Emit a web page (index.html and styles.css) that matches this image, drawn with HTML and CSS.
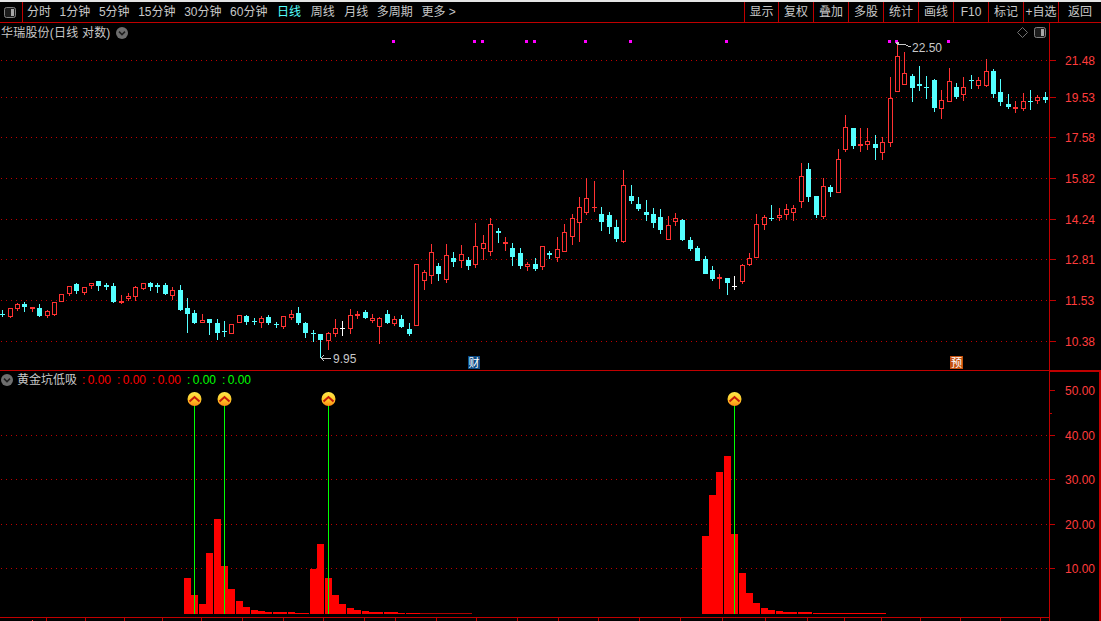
FILE: index.html
```html
<!DOCTYPE html>
<html lang="zh">
<head>
<meta charset="utf-8">
<title>华瑞股份</title>
<link rel="stylesheet" href="styles.css">
</head>
<body>
<div class="app">
  <header class="toolbar">
    <div class="panel-btn">
      <svg class="panel-icon" viewBox="0 0 12 11"><rect x=".5" y=".5" width="11" height="10" rx="2" fill="#1c1c1c" stroke="#808080"/><rect x="7" y="2" width="3" height="7" fill="#a8a8a8"/></svg>
    </div>
    <nav class="tabs">
      <span>分时</span><span>1分钟</span><span>5分钟</span><span>15分钟</span><span>30分钟</span><span>60分钟</span>
      <span class="active">日线</span><span>周线</span><span class="nudge">月线</span><span>多周期</span><span>更多 &gt;</span>
    </nav>
    <div class="actions">
      <span class="first">显示</span><span>复权</span><span>叠加</span><span>多股</span><span>统计</span><span>画线</span><span>F10</span><span>标记</span><span>+自选</span><span class="last">返回</span>
    </div>
  </header>

  <section class="pane pane-price">
    <svg id="price" class="plot" viewBox="0 23 1101 348" width="1101" height="348"></svg>
    <div class="pane-title">
      <span class="stock">华瑞股份(日线 对数)</span>
      <svg class="round-icon" viewBox="0 0 12 12"><circle cx="6" cy="6" r="6" fill="#6e6e6e"/><path d="M3 4.6 6 7.6 9 4.6" fill="none" stroke="#1e1e1e" stroke-width="1.5"/></svg>
    </div>
    <div class="pane-tools">
      <svg class="diamond" viewBox="0 0 11 11"><path d="M5.5.5 10.5 5.5 5.5 10.5 .5 5.5Z" fill="none" stroke="#707070"/></svg>
      <svg class="panel-icon" viewBox="0 0 12 11"><rect x=".5" y=".5" width="11" height="10" rx="2" fill="#1c1c1c" stroke="#808080"/><rect x="7" y="2" width="3" height="7" fill="#a8a8a8"/></svg>
    </div>
  </section>

  <section class="pane pane-indicator">
    <svg id="indicator" class="plot" viewBox="0 371 1101 250" width="1101" height="250"></svg>
    <div class="pane-title indicator-title">
      <svg class="round-icon" viewBox="0 0 12 12"><circle cx="6" cy="6" r="6" fill="#6e6e6e"/><path d="M3 4.6 6 7.6 9 4.6" fill="none" stroke="#1e1e1e" stroke-width="1.5"/></svg>
      <span class="name">黄金坑低吸</span>
      <span class="val red">: 0.00</span><span class="val red">: 0.00</span><span class="val red">: 0.00</span><span class="val green">: 0.00</span><span class="val green">: 0.00</span>
    </div>
  </section>
</div>
<script src="chart.js"></script>
</body>
</html>
```
FILE: styles.css
```css
* { box-sizing: border-box; }
html, body { margin: 0; padding: 0; background: #000; }
body { font: 12px/1 "Liberation Sans", "Noto Sans CJK SC", sans-serif; color: #c8c8c8; }
.app { width: 1101px; height: 621px; overflow: hidden; display: flex; flex-direction: column; background: #000; border-top: 2px solid #e4e4e4; }

.toolbar { display: flex; height: 21px; flex: none; border-bottom: 1px solid #c00000; }
.panel-btn { width: 23px; flex: none; border-right: 1px solid #c00000; display: flex; align-items: center; justify-content: center; padding-right: 2px; }
.panel-icon { width: 12px; height: 11px; display: block; }
.tabs { flex: 1; display: flex; align-items: center; gap: 8.6px; padding-left: 4px; white-space: nowrap; }
.tabs .active { color: #54ffff; margin: 0 1px; }
.tabs .nudge { margin-left: 1px; }
.actions { display: flex; flex: none; }
.actions span { width: 35px; border-left: 1px solid #c00000; display: flex; align-items: center; justify-content: center; white-space: nowrap; }
.actions .first { width: 34px; }
.actions .last { width: 43px; }

.pane { position: relative; flex: none; }
.pane-price { height: 348px; }
.pane-indicator { height: 250px; }
.plot { display: block; shape-rendering: crispEdges; font: 12px "Liberation Sans", sans-serif; }
.plot text { shape-rendering: auto; }
.axis-label { fill: #ff3c3c; }
.note { fill: #c8c8c8; }
.badge { font: 11px "Noto Sans CJK SC", sans-serif; fill: #fff; }

.pane-title { position: absolute; left: 1px; top: 3px; display: flex; align-items: center; gap: 5px; height: 13px; }
.stock { letter-spacing: 0.2px; }
.round-icon { width: 12px; height: 12px; display: block; flex: none; }
.pane-tools { position: absolute; left: 1017px; top: 4px; display: flex; align-items: center; gap: 6px; }
.diamond { width: 11px; height: 11px; display: block; }
.indicator-title { top: 2px; gap: 0; }
.indicator-title .name { margin-left: 4px; width: 65px; }
.val { width: 35px; white-space: pre; word-spacing: -1px; }
.red { color: #ff0000; }
.green { color: #00ff00; }
```
FILE: chart.js
```js
var NS = 'http://www.w3.org/2000/svg';
function el(parent, tag, attrs, text) {
  var e = document.createElementNS(NS, tag);
  for (var k in attrs) e.setAttribute(k, attrs[k]);
  if (text) e.textContent = text;
  parent.appendChild(e);
  return e;
}
function rect(p, x, y, w, h, fill) { return el(p, 'rect', { x: x, y: y, width: w, height: h, fill: fill }); }

var RED = '#ff3232', CYAN = '#54ffff', WHITE = '#ffffff', GRID = '#c00000', LINE = '#c00000';
var price = document.getElementById('price');
var ind = document.getElementById('indicator');

function dotted(svg, y) {
  el(svg, 'line', { x1: 1, x2: 1049, y1: y + 0.5, y2: y + 0.5, stroke: GRID, 'stroke-width': 1, 'stroke-dasharray': '1 4' });
}

/* ---- price pane ---- */
[[60, '21.48'], [97, '19.53'], [137, '17.58'], [178, '15.82'], [219, '14.24'], [259, '12.81'], [300, '11.53'], [341, '10.38']].forEach(function (g) {
  dotted(price, g[0]);
  rect(price, 1049, g[0], 7, 1, LINE);
  el(price, 'text', { x: 1065, y: g[0] + 5, 'class': 'axis-label' }, g[1]);
});
rect(price, 1049, 23, 1, 348, LINE);
rect(price, 0, 370, 1049, 1, LINE);
rect(price, 1049, 370, 52, 1, LINE);

[392, 473, 481, 525, 533, 584, 629, 725, 888, 895, 947].forEach(function (x) { rect(price, x, 40, 3, 3, '#ff00ff'); });

/* candles per reference crop: [x, colour, bodyTop, bodyBottom, wickTop, wickBottom] in 3x crop units */
var blocks = [
  { bx: 0, by: 270, c: [
    [7,'c',131,134,120,141],[31,'r',114,141,114,144],[52,'r',103,117,99,122],[73,'c',102,111,96,126],[97,'r',111,116,111,126],[118,'c',114,138,102,141],[142,'r',123,138,120,144],[163,'r',96,135,96,138],[184,'r',72,96,72,96],[208,'r',48,72,48,78],[229,'c',42,63,39,72],[253,'r',52,69,52,75],[274,'r',40,48,40,57],[295,'c',33,48,33,63],[319,'c',45,51,39,60],[340,'c',48,96,39,99],[364,'r',93,99,75,102],[385,'r',79,87,69,93],[406,'r',51,81,48,93],[430,'r',40,57,40,60],[451,'c',39,51,36,63],[472,'c',45,51,39,69],[496,'c',45,72,39,75],[517,'r',60,78,51,90],[541,'c',60,120,45,123],[562,'c',114,132,84,189],[583,'c',129,159,120,162],[607,'r',150,159,132,159],[628,'c',147,159,147,195],[652,'c',159,189,147,210],[673,'c',183,186,153,201],[694,'r',162,192,162,192],[718,'r',135,159,135,159]
  ]},
  { bx: 240, by: 220, c: [
    [19,'c',288,306,285,315],[43,'c',303,306,294,315],[64,'r',294,309,288,324],[85,'c',291,309,285,315],[109,'c',312,315,306,324],[130,'r',288,321,288,327],[154,'r',282,294,270,300],[175,'c',279,309,261,315],[196,'c',309,339,306,354],[220,'c',339,342,330,366],[241,'c',342,360,342,414],[265,'r',339,363,336,390],[286,'r',324,342,297,351],[307,'w',324,327,303,348],[331,'r',285,327,267,342],[352,'r',282,288,273,297],[376,'c',276,294,270,297],[397,'r',294,303,282,309],[418,'r',294,321,291,372],[442,'c',282,309,270,312],[463,'r',297,312,288,318],[484,'c',297,321,285,324],[508,'c',327,342,309,348],[529,'r',133,318,133,318],[553,'r',156,183,150,210],[574,'r',96,168,72,192],[595,'c',138,162,129,183],[619,'r',105,180,72,189],[640,'c',114,126,96,141],[664,'r',102,123,75,144],[685,'c',120,138,111,150],[706,'r',78,135,9,144]
  ]},
  { bx: 480, by: 160, c: [
    [10,'r',249,267,225,300],[31,'r',192,276,174,288],[55,'c',213,219,204,249],[76,'r',246,252,231,273],[97,'c',264,291,249,318],[121,'c',279,318,264,327],[142,'r',312,321,306,333],[166,'c',312,327,294,333],[187,'r',258,321,258,330],[208,'c',279,285,273,297],[232,'r',267,294,231,306],[253,'r',216,276,192,276],[277,'r',174,231,162,255],[298,'r',141,189,111,246],[319,'r',114,159,54,165],[343,'r',141,144,63,156],[364,'c',162,186,141,213],[388,'c',165,201,156,222],[409,'c',201,237,180,246],[430,'r',75,246,30,249],[454,'c',108,123,75,132],[475,'c',132,147,111,153],[499,'c',156,165,120,183],[520,'c',162,189,144,204],[541,'c',171,210,147,222],[565,'r',195,240,168,240],[586,'r',175,186,159,198],[607,'c',180,240,177,243],[631,'c',240,267,231,273],[652,'c',264,303,258,303],[676,'c',297,342,288,342],[697,'c',330,357,318,363],[718,'r',351,357,342,387]
  ]},
  { bx: 700, by: 130, c: [
    [82,'c',444,459,444,495],[103,'w',468,471,438,480],[127,'r',405,456,402,462],[148,'r',384,405,369,408],[169,'r',282,384,252,384],[193,'r',261,285,255,300],[214,'c',264,267,225,273],[238,'r',255,264,234,273],[259,'r',237,255,222,270],[280,'r',234,249,225,273],[304,'r',138,216,99,234],[325,'c',117,201,99,216],[349,'c',198,255,198,264],[370,'r',168,261,144,267],[391,'c',171,186,165,201],[415,'r',87,189,57,189],[436,'r',-9,60,-45,66],[460,'c',-6,48,-6,57],[481,'r',42,48,-6,66],[502,'r',34,45,-6,60],[526,'c',42,54,15,90]
  ]},
  { bx: 880, by: 40, c: [
    [7,'r',306,339,291,360],[31,'r',174,309,111,321],[52,'r',48,156,6,156],[73,'r',99,135,36,135],[97,'c',108,144,102,186],[118,'c',132,138,78,153],[139,'c',141,144,108,177],[163,'c',120,204,117,216],[184,'r',180,207,150,237],[208,'r',123,186,84,186],[229,'c',141,171,129,177],[250,'r',141,165,111,183],[274,'c',120,123,105,147],[295,'r',120,138,111,147],[319,'r',93,138,57,141],[340,'c',93,162,87,174],[361,'c',156,186,117,198],[385,'c',192,201,162,207],[406,'r',201,207,183,219],[430,'r',183,207,159,213],[451,'c',183,186,150,210],[472,'r',171,183,165,192],[496,'c',171,180,156,189]
  ]}
];
var colours = { r: RED, c: CYAN, w: WHITE };
blocks.forEach(function (b) {
  b.c.forEach(function (d) {
    var x = b.bx + Math.floor(d[0] / 3);
    var col = colours[d[1]];
    var top = b.by + Math.round(d[2] / 3), bot = b.by + Math.round(d[3] / 3);
    var wt = b.by + Math.round(d[4] / 3), wb = b.by + Math.round(d[5] / 3);
    rect(price, x, wt, 1, wb - wt, col);
    var h = bot - top;
    if (d[1] === 'r' && h > 2) {
      rect(price, x - 2, top, 5, h, col);
      rect(price, x - 1, top + 1, 3, h - 2, '#000');
    } else {
      rect(price, x - 2, top, 5, Math.max(h, 1), col);
    }
  });
});

/* extreme-price notes */
function note(points, x, y, label) {
  el(price, 'polyline', { points: points, fill: 'none', stroke: '#c8c8c8', 'stroke-width': 1 });
  el(price, 'text', { x: x, y: y, 'class': 'note' }, label);
}
note('324,355 321,358 324,361 321,358 331,358', 333, 363, '9.95');
note('899,42 896,43 899,45 896,43 902,45 904,44 908,46 911,46', 912, 52, '22.50');

/* event badges */
rect(price, 468, 356, 12, 13, '#0b4a84');
el(price, 'text', { x: 468.5, y: 366.5, 'class': 'badge' }, '财');
rect(price, 950, 356, 13, 13, '#c4500e');
el(price, 'text', { x: 951, y: 366.5, 'class': 'badge' }, '预');

/* ---- indicator pane ---- */
[435, 479, 524, 568].forEach(function (y) { dotted(ind, y); });
[[390, '50.00'], [435, '40.00'], [479, '30.00'], [524, '20.00'], [568, '10.00']].forEach(function (g) {
  rect(ind, 1049, g[0], 6, 1, LINE);
  el(ind, 'text', { x: 1065, y: g[0] + 5, 'class': 'axis-label' }, g[1]);
});
[413].forEach(function (y) { rect(ind, 1049, y, 3, 1, LINE); });
rect(ind, 1049, 371, 1, 250, LINE);
rect(ind, 1049, 371, 52, 1, LINE);
rect(ind, 1099, 371, 2, 250, LINE);
rect(ind, 0, 617, 1050, 1, LINE);
[46, 85, 124, 162, 201, 242, 283, 323, 364, 395, 436, 476, 517, 558, 598, 639, 680, 722, 765, 807, 844, 881, 920, 960, 1000, 1040].forEach(function (x) {
  rect(ind, x, 618, 1, 3, LINE);
});
rect(ind, 32, 620, 1, 1, RED);

/* bars: [left, top] each 7 wide, resting on y=614 */
[[184,578],[191,595],[199,604],[206,553],[214,519],[221,566],[228,589],[236,601],[243,607],[251,610],[258,611],[265,612],[273,612],[280,612],[288,612],[295,613],[302,613],
 [310,569],[317,544],[325,578],[332,595],[339,604],[347,608],[354,610],[362,611],[369,612],[376,612],[384,612],[391,612],[398,613],[406,613],[413,613],
 [702,536],[709,495],[716,472],[724,456],[731,534],[739,573],[746,593],[753,603],[761,608],[768,610],[776,611],[783,612],[790,612],[798,612],[805,612]
].forEach(function (b) { rect(ind, b[0], b[1], 7, 614 - b[1], '#ff0000'); });
rect(ind, 420, 613, 52, 1, '#b00000');
rect(ind, 813, 613, 73, 1, '#ff0000');

/* signals */
var defs = el(ind, 'defs', {});
var grad = el(defs, 'linearGradient', { id: 'sig', x1: 0, y1: 0, x2: 0, y2: 1 });
el(grad, 'stop', { offset: '0', 'stop-color': '#ffe84a' });
el(grad, 'stop', { offset: '0.55', 'stop-color': '#ffc828' });
el(grad, 'stop', { offset: '1', 'stop-color': '#ff8a14' });
[194, 224, 328, 734].forEach(function (x) {
  rect(ind, x, 392, 1, 222, '#00ff00');
  var g = el(ind, 'g', { style: 'shape-rendering:auto' });
  el(g, 'circle', { cx: x + 0.5, cy: 399, r: 7, fill: 'url(#sig)' });
  el(g, 'path', { d: 'M' + (x - 4.5) + ' 401.5 L' + (x + 0.5) + ' 397 L' + (x + 5.5) + ' 401.5', fill: 'none', stroke: '#c41a08', 'stroke-width': 2 });
});
```
